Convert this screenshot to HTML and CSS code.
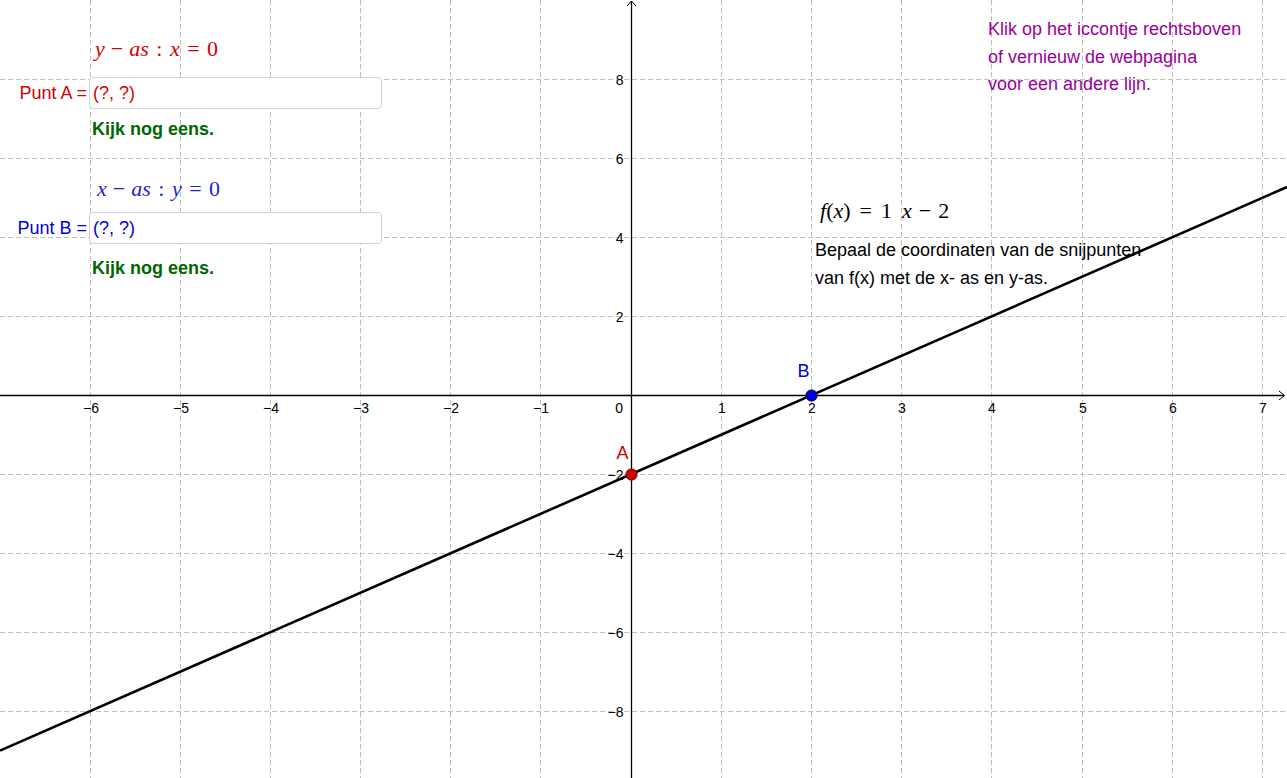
FILE: index.html
```html
<!DOCTYPE html>
<html lang="nl">
<head>
<meta charset="utf-8">
<title>Snijpunten met de assen</title>
<link rel="stylesheet" href="styles.css">
</head>
<body>
<div class="applet">
  <svg class="graph" width="1287" height="778" viewBox="0 0 1287 778">
    <g class="grid">
      <line x1="90.5" y1="0" x2="90.5" y2="778"/>
      <line x1="180.5" y1="0" x2="180.5" y2="778"/>
      <line x1="270.5" y1="0" x2="270.5" y2="778"/>
      <line x1="360.5" y1="0" x2="360.5" y2="778"/>
      <line x1="450.5" y1="0" x2="450.5" y2="778"/>
      <line x1="540.5" y1="0" x2="540.5" y2="778"/>
      <line x1="721.5" y1="0" x2="721.5" y2="778"/>
      <line x1="811.5" y1="0" x2="811.5" y2="778"/>
      <line x1="901.5" y1="0" x2="901.5" y2="778"/>
      <line x1="991.5" y1="0" x2="991.5" y2="778"/>
      <line x1="1082.5" y1="0" x2="1082.5" y2="778"/>
      <line x1="1172.5" y1="0" x2="1172.5" y2="778"/>
      <line x1="1262.5" y1="0" x2="1262.5" y2="778"/>
      <line x1="0" y1="79.5" x2="1287" y2="79.5"/>
      <line x1="0" y1="158.5" x2="1287" y2="158.5"/>
      <line x1="0" y1="237.5" x2="1287" y2="237.5"/>
      <line x1="0" y1="316.5" x2="1287" y2="316.5"/>
      <line x1="0" y1="474.5" x2="1287" y2="474.5"/>
      <line x1="0" y1="553.5" x2="1287" y2="553.5"/>
      <line x1="0" y1="632.5" x2="1287" y2="632.5"/>
      <line x1="0" y1="711.5" x2="1287" y2="711.5"/>
    </g>
    <g class="axes">
      <line x1="0" y1="395.5" x2="1284" y2="395.5"/>
      <polyline points="1279,391 1284.5,395.5 1279,400"/>
      <line x1="631.5" y1="1" x2="631.5" y2="778"/>
      <polyline points="627,6 631.5,1 636,6"/>
    </g>
    <g class="ticks ticks-x">
      <text x="91" y="413">−6</text>
      <text x="181" y="413">−5</text>
      <text x="271" y="413">−4</text>
      <text x="361" y="413">−3</text>
      <text x="451" y="413">−2</text>
      <text x="541" y="413">−1</text>
      <text x="722" y="413">1</text>
      <text x="812" y="413">2</text>
      <text x="902" y="413">3</text>
      <text x="992" y="413">4</text>
      <text x="1083" y="413">5</text>
      <text x="1173" y="413">6</text>
      <text x="1263" y="413">7</text>
    </g>
    <g class="ticks ticks-y">
      <text x="623" y="413">0</text>
      <text x="623.5" y="84.5">8</text>
      <text x="623.5" y="163.5">6</text>
      <text x="623.5" y="242.5">4</text>
      <text x="623.5" y="321.5">2</text>
      <text x="623.5" y="479.5">−2</text>
      <text x="623.5" y="558.5">−4</text>
      <text x="623.5" y="637.5">−6</text>
      <text x="623.5" y="716.5">−8</text>
    </g>
    <line class="fn" x1="0" y1="750.6" x2="1287" y2="187"/>
    <circle class="pt pt-a" cx="631.5" cy="474.5" r="5.6"/>
    <circle class="pt pt-b" cx="811.5" cy="395.5" r="5.6"/>
    <text class="pt-label lbl-a" x="616.5" y="459">A</text>
    <text class="pt-label lbl-b" x="797.5" y="377">B</text>
  </svg>

  <div class="tex tex-a"><span class="mi">y</span><span class="mo bin">−</span><span class="mi">as</span><span class="mo rel">:</span><span class="mi">x</span><span class="mo rel">=</span><span class="mn">0</span></div>
  <div class="input-row row-a">
    <span class="input-label">Punt A =</span>
    <div class="input-box">(?, ?)</div>
  </div>
  <div class="feedback fb-a">Kijk nog eens.</div>

  <div class="tex tex-b"><span class="mi">x</span><span class="mo bin">−</span><span class="mi">as</span><span class="mo rel">:</span><span class="mi">y</span><span class="mo rel">=</span><span class="mn">0</span></div>
  <div class="input-row row-b">
    <span class="input-label">Punt B =</span>
    <div class="input-box">(?, ?)</div>
  </div>
  <div class="feedback fb-b">Kijk nog eens.</div>

  <div class="tex tex-f"><span class="mi">f</span><span class="mn">(</span><span class="mi">x</span><span class="mn">)</span><span class="mo rel">=</span><span class="mn">1</span><span class="mi sp">x</span><span class="mo bin">−</span><span class="mn">2</span></div>

  <div class="note task">Bepaal de coordinaten van de snijpunten<br>van f(x) met de x- as en y-as.</div>
  <div class="note hint">Klik op het iccontje rechtsboven<br>of vernieuw de webpagina<br>voor een andere lijn.</div>
</div>
</body>
</html>
```

FILE: styles.css
```css
html, body {
  margin: 0;
  padding: 0;
  background: #ffffff;
}

body {
  font-family: "Liberation Sans", Arial, sans-serif;
  overflow: hidden;
}

.applet {
  position: relative;
  width: 1287px;
  height: 778px;
  overflow: hidden;
  background: #ffffff;
}

.graph {
  position: absolute;
  left: 0;
  top: 0;
  display: block;
}

.grid line {
  stroke: #c0c0c0;
  stroke-width: 1;
  stroke-dasharray: 5 3;
}

.axes line {
  stroke: #000000;
  stroke-width: 1.3;
}

.axes polyline {
  fill: none;
  stroke: #000000;
  stroke-width: 1;
}

.ticks text {
  font-family: "Liberation Sans", Arial, sans-serif;
  font-size: 14px;
  fill: #000000;
}

.ticks-x text {
  text-anchor: middle;
}

.ticks-y text {
  text-anchor: end;
}

.fn {
  stroke: #000000;
  stroke-width: 2.6;
}

.pt {
  stroke-width: 1;
}

.pt-a {
  fill: #d40000;
  stroke: #5a0000;
}

.pt-b {
  fill: #0000d8;
  stroke: #00004a;
}

.pt-label {
  font-family: "Liberation Sans", Arial, sans-serif;
  font-size: 18px;
}

.lbl-a { fill: #d40000; }
.lbl-b { fill: #0000d8; }

/* LaTeX-like formula texts */
.tex {
  position: absolute;
  font-family: "Liberation Serif", "Times New Roman", serif;
  font-size: 22px;
  line-height: 26px;
  white-space: nowrap;
  display: flex;
  align-items: baseline;
}

.tex .mi {
  font-style: italic;
}

.tex .mn, .tex .mo {
  font-style: normal;
}

.tex .bin {
  margin: 0 6px;
}

.tex .rel {
  margin: 0 7.5px;
}

.tex .sp {
  margin-left: 10px;
}

.tex-f .rel {
  margin: 0 9px;
}

.tex-f .bin {
  margin: 0 7px;
}

.tex-a {
  left: 95px;
  top: 36px;
  color: #d40000;
}

.tex-b {
  left: 97px;
  top: 176px;
  color: #1f1fd0;
}

.tex-f {
  left: 820px;
  top: 198px;
  color: #000000;
}

/* input rows */
.input-row {
  position: absolute;
  left: 0;
  display: flex;
  align-items: center;
  font-size: 18px;
}

.row-a {
  top: 77px;
  color: #d40000;
}

.row-b {
  top: 212px;
  color: #0000d8;
}

.input-label {
  width: 87px;
  text-align: right;
  white-space: nowrap;
}

.input-box {
  box-sizing: border-box;
  margin-left: 2px;
  width: 293px;
  height: 32px;
  line-height: 30px;
  padding-left: 3px;
  border: 1px solid #d3d3d3;
  border-radius: 4px;
  background: #ffffff;
  font-size: 18px;
}

.feedback {
  position: absolute;
  left: 92px;
  font-weight: bold;
  font-size: 18px;
  line-height: 20px;
  color: #006600;
  white-space: nowrap;
}

.fb-a { top: 119px; }
.fb-b { top: 258px; }

.note {
  position: absolute;
  font-size: 18px;
  line-height: 27.5px;
  white-space: nowrap;
}

.task {
  left: 815px;
  top: 237px;
  color: #000000;
}

.hint {
  left: 988px;
  top: 16px;
  color: #990099;
}
```
